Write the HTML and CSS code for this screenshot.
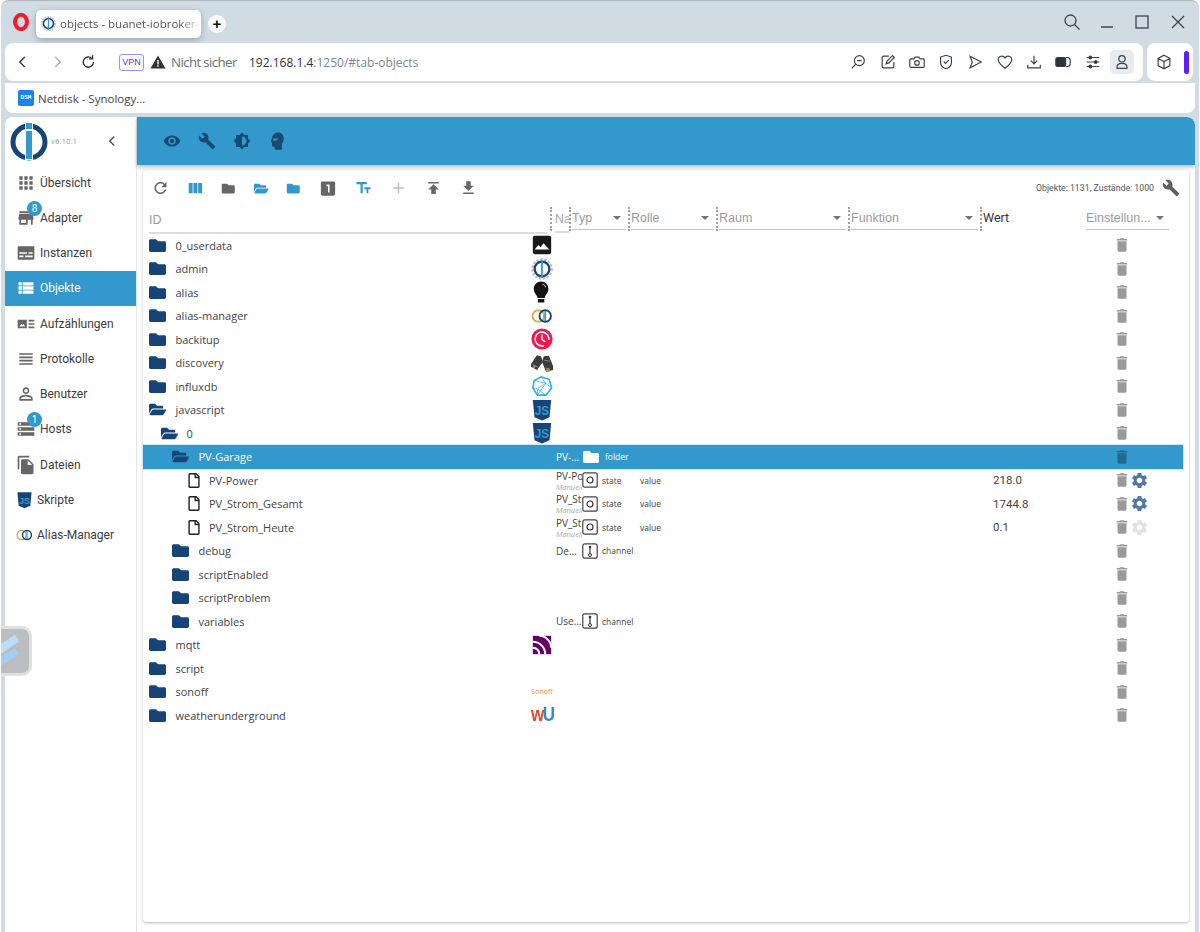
FILE: index.html
```html
<!DOCTYPE html>
<html lang="de">
<head>
<meta charset="utf-8">
<title>objects - buanet-iobroker</title>
<link rel="stylesheet" href="styles.css">
</head>
<body>
<svg class="defs" aria-hidden="true">
  <symbol id="m-eye" viewBox="0 0 24 24"><path d="M12 4.5C7 4.5 2.73 7.61 1 12c1.73 4.39 6 7.5 11 7.5s9.27-3.11 11-7.5c-1.73-4.39-6-7.5-11-7.5zM12 17c-2.76 0-5-2.24-5-5s2.24-5 5-5 5 2.24 5 5-2.24 5-5 5zm0-8c-1.66 0-3 1.34-3 3s1.34 3 3 3 3-1.34 3-3-1.34-3-3-3z"/></symbol>
  <symbol id="m-build" viewBox="0 0 24 24"><path d="M22.7 19l-9.1-9.1c.9-2.3.4-5-1.5-6.9-2-2-5-2.4-7.4-1.3L9 6 6 9 1.6 4.7C.4 7.1.9 10.1 2.9 12.1c1.9 1.9 4.6 2.4 6.9 1.5l9.1 9.1c.4.4 1 .4 1.4 0l2.3-2.3c.5-.4.5-1.1.1-1.4z"/></symbol>
  <symbol id="m-bright" viewBox="0 0 24 24"><path d="M20 15.31L23.31 12 20 8.69V4h-4.69L12 .69 8.69 4H4v4.69L.69 12 4 15.31V20h4.69L12 23.31 15.31 20H20v-4.69zM12 18V6c3.31 0 6 2.69 6 6s-2.69 6-6 6z"/></symbol>
  <symbol id="m-head" viewBox="0 0 24 24"><path fill-rule="evenodd" d="M9 23.500v-4H7c-1 0-1.800-1-1.800-2v-3.500L3.500 13 5.300 8.500C5.800 4 9 .5 13.500 .5c4.500 0 7.500 3.500 7.500 8.200 0 3-1 5.500-2.500 7.300v7.500zM7 8.500v3h3.800l1-1.500h1.700V8.500z"/></symbol>
  <symbol id="fa-folder" viewBox="0 0 512 512"><path d="M464 128H272l-64-64H48C21.490 64 0 85.490 0 112v288c0 26.510 21.490 48 48 48h416c26.510 0 48-21.490 48-48V176c0-26.510-21.490-48-48-48z"/></symbol>
  <symbol id="fa-open" viewBox="0 0 576 512"><path d="M572.694 292.093L500.270 416.248A63.997 63.997 0 0 1 444.989 448H45.025c-18.523 0-30.064-20.093-20.731-36.093l72.424-124.155A64 64 0 0 1 152 256h399.964c18.523 0 30.064 20.093 20.730 36.093zM152 224h328v-48c0-26.510-21.490-48-48-48H272l-64-64H48C21.490 64 0 85.490 0 112v278.046l69.077-118.418C86.214 242.250 117.989 224 152 224z"/></symbol>
  <symbol id="fa-file" viewBox="0 0 384 512"><path d="M369.900 97.900L286 14C277 5 264.800-.1 252.100-.1H48C21.500 0 0 21.500 0 48v416c0 26.500 21.500 48 48 48h288c26.500 0 48-21.500 48-48V131.900c0-12.700-5.100-25-14.100-34zM332.100 128H256V51.900l76.100 76.100zM48 464V48h160v104c0 13.300 10.700 24 24 24h104v288H48z"/></symbol>
  <symbol id="m-del" viewBox="0 0 24 24"><path d="M6 19c0 1.100.9 2 2 2h8c1.100 0 2-.9 2-2V7H6v12zM19 4h-3.500l-1-1h-5l-1 1H5v2h14V4z"/></symbol>
  <symbol id="m-gear" viewBox="0 0 24 24"><path d="M19.140 12.940c.04-.3.06-.61.06-.94 0-.32-.02-.64-.07-.94l2.030-1.580c.18-.14.23-.41.12-.61l-1.920-3.320c-.12-.22-.37-.29-.59-.22l-2.390.96c-.5-.38-1.030-.7-1.620-.94l-.36-2.540c-.04-.24-.24-.41-.48-.41h-3.840c-.24 0-.43.17-.47.41l-.36 2.540c-.59.24-1.130.57-1.620.94l-2.390-.96c-.22-.08-.47 0-.59.22L2.740 8.870c-.12.21-.08.47.12.61l2.030 1.580c-.05.3-.09.63-.09.94s.02.64.07.94l-2.030 1.580c-.18.14-.23.41-.12.61l1.920 3.320c.12.22.37.29.59.22l2.390-.96c.5.38 1.030.7 1.620.94l.36 2.540c.05.24.24.41.48.41h3.840c.24 0 .44-.17.47-.41l.36-2.540c.59-.24 1.130-.56 1.620-.94l2.390.96c.22.08.47 0 .59-.22l1.920-3.320c.12-.22.07-.47-.12-.61l-2.010-1.580zM12 15.600c-1.980 0-3.600-1.620-3.600-3.600s1.620-3.600 3.600-3.600 3.600 1.620 3.600 3.600-1.620 3.600-3.600 3.600z"/></symbol>
  <symbol id="m-refresh" viewBox="0 0 24 24"><path d="M17.650 6.350C16.200 4.900 14.210 4 12 4c-4.420 0-7.990 3.580-7.990 8s3.570 8 7.990 8c3.730 0 6.840-2.550 7.730-6h-2.080c-.82 2.330-3.040 4-5.650 4-3.310 0-6-2.690-6-6s2.690-6 6-6c1.660 0 3.140.69 4.220 1.780L13 11h7V4l-2.350 2.350z"/></symbol>
  <symbol id="m-cols" viewBox="0 0 24 24"><path d="M10 18h5V5h-5v13zm-6 0h5V5H4v13zM16 5v13h5V5h-5z"/></symbol>
  <symbol id="m-one" viewBox="0 0 24 24"><path d="M19 3H5c-1.100 0-2 .9-2 2v14c0 1.100.9 2 2 2h14c1.100 0 2-.9 2-2V5c0-1.100-.9-2-2-2zm-5 14h-2V9h-2V7h4v10z"/></symbol>
  <symbol id="m-size" viewBox="0 0 24 24"><path d="M2.500 4v3h5.500v12h3V7h5.500V4zM13 11v2.500h3V19h2.500v-5.500h3V11z"/></symbol>
  <symbol id="m-add" viewBox="0 0 24 24"><path d="M19 13h-6v6h-2v-6H5v-2h6V5h2v6h6v2z"/></symbol>
  <symbol id="m-pub" viewBox="0 0 24 24"><path d="M5 4v2h14V4H5zm0 10h4v6h6v-6h4l-7-7-7 7z"/></symbol>
  <symbol id="m-down" viewBox="0 0 24 24"><path d="M19 9h-4V3H9v6H5l7 7 7-7zM5 18v2h14v-2H5z"/></symbol>
  <symbol id="m-apps" viewBox="0 0 24 24"><path d="M4 8h4V4H4v4zm6 12h4v-4h-4v4zm-6 0h4v-4H4v4zm0-6h4v-4H4v4zm6 0h4v-4h-4v4zm6-10v4h4V4h-4zm-6 4h4V4h-4v4zm6 6h4v-4h-4v4zm0 6h4v-4h-4v4z"/></symbol>
  <symbol id="m-store" viewBox="0 0 24 24"><path d="M20 4H4v2h16V4zm1 10v-2l-1-5H4l-1 5v2h1v6h10v-6h4v6h2v-6h1zm-9 4H6v-4h6v4z"/></symbol>
  <symbol id="m-inst" viewBox="0 0 24 24"><path fill-rule="evenodd" d="M3 4h18a1 1 0 0 1 1 1v14a1 1 0 0 1-1 1H3a1 1 0 0 1-1-1V5a1 1 0 0 1 1-1zM4 11v2h9v-2zM15 11v2h5v-2zM4 15v2h5v-2zM11 15v2h9v-2z"/></symbol>
  <symbol id="m-list" viewBox="0 0 24 24"><path d="M3 14h4v-4H3v4zm0 5h4v-4H3v4zM3 9h4V5H3v4zm5 5h13v-4H8v4zm0 5h13v-4H8v4zM8 5v4h13V5H8z"/></symbol>
  <symbol id="m-enum" viewBox="0 0 24 24"><path fill-rule="evenodd" d="M2 7h11v10H2zM4 15h7l-2-3-1.500 1.500L6.500 12zM15 7h7v2h-7zM15 11h7v2h-7zM15 15h7v2h-7z"/></symbol>
  <symbol id="m-log" viewBox="0 0 24 24"><path d="M4 15h16v-2H4v2zm0 4h16v-2H4v2zm0-8h16V9H4v2zm0-6v2h16V5H4z"/></symbol>
  <symbol id="m-user" viewBox="0 0 24 24"><path d="M12 5.900c1.160 0 2.100.94 2.100 2.100s-.94 2.100-2.100 2.100S9.900 9.160 9.900 8s.94-2.100 2.100-2.100m0 9c2.970 0 6.100 1.460 6.100 2.100v1.100H5.900V17c0-.64 3.130-2.100 6.100-2.100M12 4C9.790 4 8 5.790 8 8s1.790 4 4 4 4-1.790 4-4-1.790-4-4-4zm0 9c-2.670 0-8 1.340-8 4v3h16v-3c0-2.660-5.330-4-8-4z"/></symbol>
  <symbol id="m-host" viewBox="0 0 24 24"><path d="M2 20h20v-4H2v4zm2-3h2v2H4v-2zM2 4v4h20V4H2zm4 3H4V5h2v2zm-4 7h20v-4H2v4zm2-3h2v2H4v-2z"/></symbol>
  <symbol id="m-files" viewBox="0 0 24 24"><path d="M16 1H4c-1.100 0-2 .9-2 2v14h2V3h12V1zm-1 4l6 6v10c0 1.100-.9 2-2 2H7.990C6.890 23 6 22.100 6 21l.01-14c0-1.100.89-2 1.990-2h7zm-1 7h5.500L14 6.500V12z"/></symbol>
  <symbol id="l-io" viewBox="0 0 40 40"><circle cx="20" cy="21" r="16" fill="none" stroke="#164477" stroke-width="5"/><rect x="16" y="1" width="8" height="38" fill="#fff"/><rect x="17" y="2" width="6" height="6" fill="#3399cc"/><rect x="17" y="10" width="6" height="28" fill="#3399cc"/></symbol>
  <symbol id="l-js" viewBox="0 0 24 24"><path fill="#164477" d="M2 1h20l-1.800 19L12 23.500 3.800 20z"/><text x="12" y="17" class="js-text">JS</text></symbol>
  <symbol id="l-alias" viewBox="0 0 24 24"><circle cx="8" cy="12" r="6.300" fill="none" stroke="#d9ab45" stroke-width="2"/><circle cx="15.500" cy="12" r="6.300" fill="none" stroke="#164477" stroke-width="2"/><rect x="14.600" y="6.500" width="1.800" height="11" fill="#3399cc"/></symbol>
  <symbol id="l-image" viewBox="0 0 24 24"><rect x="2" y="2" width="20" height="20" rx="2" fill="#1a1a1a"/><path fill="#fff" d="M4 17l4-5 2.500 2.500L13.500 10l6.500 7z"/></symbol>
  <symbol id="l-admin" viewBox="0 0 24 24"><circle cx="12" cy="12" r="10.500" fill="none" stroke="#b8bcc0" stroke-width="2.500" stroke-dasharray="2.500 1.800"/><circle cx="12" cy="12" r="8" fill="#fff" stroke="#164477" stroke-width="2.500"/><rect x="11" y="2" width="2" height="20" fill="#3399cc"/></symbol>
  <symbol id="l-bulb" viewBox="0 0 24 24"><path fill="#141414" d="M11 .5a8 8 0 0 0-8 8c0 3.500 2 5.500 3.200 7.500.6.9.8 1.500.9 2.500h7.800c.1-1 .3-1.600.9-2.500C17 14 19 12 19 8.500a8 8 0 0 0-8-8zM7.500 19.500h7V23.500h-7z"/><path fill="none" stroke="#fff" stroke-width="1" d="M12.500 3.500c1.800.4 3 1.600 3.400 3.400"/></symbol>
  <symbol id="l-backup" viewBox="0 0 24 24"><circle cx="12" cy="12" r="11.500" fill="#f5144c"/><circle cx="12" cy="12" r="7.500" fill="none" stroke="#fff" stroke-width="1.700" stroke-dasharray="38 9" transform="rotate(75 12 12)"/><path fill="none" stroke="#fff" stroke-width="1.600" d="M12 7v5.500l3.500 2.500"/></symbol>
  <symbol id="l-bino" viewBox="0 0 24 24"><g fill="#3c3c3c"><path d="M0 13L6.500 3.500 11 5l2 6-6.500 8.500L0 16z"/><path d="M24 15L19.500 4l-5.500.5-2 6.500 4.500 10.500 7.500-2z"/></g><path d="M2 13.500l5.500 3M14.500 9l6 1" stroke="#8a8a8a" stroke-width="1"/><circle cx="18.500" cy="19.500" r="2.200" fill="#a58a3a"/><circle cx="3.500" cy="16" r="1.600" fill="#a58a3a"/></symbol>
  <symbol id="l-influx" viewBox="0 0 24 24"><g fill="none" stroke="#2bb1f2" stroke-width="1.400"><path stroke-width="1.800" d="M11 2L20 5l2.500 9-6 8H7L2 14 3.500 6z"/><path stroke-width=".8" d="M3.500 6L16 9l-9 13M16 9l6.500 5M16 9l-5-7M7 15l9-6M2 14l5 1v7M7 15l9 7"/></g></symbol>
  <symbol id="l-mqtt" viewBox="0 0 24 24"><rect x="2" y="2" width="20" height="20" fill="#660066"/><g fill="none" stroke="#fff" stroke-width="2.200"><path d="M2 8.500c7.500 0 13.500 6 13.500 13.500"/><path d="M2 15c4 0 7 3 7 7"/><path d="M9 2c7 0 13 6 13 13"/></g></symbol>
  <symbol id="t-state" viewBox="0 0 16 16"><rect x=".8" y=".8" width="14.400" height="14.400" rx="2" fill="none" stroke="#444" stroke-width="1.200"/><circle cx="8" cy="8" r="3" fill="none" stroke="#333" stroke-width="1.200"/></symbol>
  <symbol id="t-channel" viewBox="0 0 16 16"><rect x=".8" y=".8" width="14.400" height="14.400" rx="2" fill="none" stroke="#444" stroke-width="1.200"/><path d="M8 5v6" stroke="#333" stroke-width="1.200"/><circle cx="8" cy="4" r="1.300" fill="#333"/><circle cx="8" cy="12" r="1.500" fill="none" stroke="#333"/></symbol>
</svg>

<div class="window">
  <div class="tabbar">
    <svg class="opera" viewBox="0 0 18 18"><ellipse cx="9" cy="9" rx="6" ry="7.200" fill="none" stroke="#ee1c2e" stroke-width="4"/></svg>
    <div class="tab">
      <svg class="tab-ico"><use href="#l-admin"/></svg>
      <span class="tab-title">objects - buanet-iobroker-admin</span>
    </div>
    <div class="newtab">+</div>
    <div class="winctl">
      <svg viewBox="0 0 20 20"><circle cx="8.500" cy="8.500" r="5.500"/><path d="M12.500 12.500l5 5"/></svg>
      <svg viewBox="0 0 20 20"><path d="M4 15h12"/></svg>
      <svg viewBox="0 0 20 20"><rect x="4" y="4" width="12" height="12"/></svg>
      <svg viewBox="0 0 20 20"><path d="M4 4l12 12M16 4L4 16"/></svg>
    </div>
  </div>

  <div class="toolrow">
    <div class="addr">
      <svg class="nav" viewBox="0 0 20 20"><path d="M12.500 4.500L7 10l5.500 5.500"/></svg>
      <svg class="nav nav-off" viewBox="0 0 20 20"><path d="M7.500 4.500L13 10l-5.500 5.500"/></svg>
      <svg class="nav nav-re" viewBox="0 0 20 20"><path d="M15.500 10a5.700 5.700 0 1 1-1.700-4"/><path d="M14.500 2.500V6.500h-4"/></svg>
      <span class="vpn">VPN</span>
      <svg class="warn" viewBox="0 0 16 16"><path fill="#333" d="M8 1.500L15.500 14.500H.5z"/><path fill="#fff" d="M7.300 6h1.400v4.500H7.300zM7.300 11.300h1.400v1.400H7.300z"/></svg>
      <span class="insecure">Nicht sicher</span>
      <span class="url">192.168.1.4<span class="url-dim">:1250/#tab-objects</span></span>
      <div class="addr-tools">
        <svg viewBox="0 0 20 20"><circle cx="11.500" cy="8.500" r="5.500"/><path d="M7.500 12.500L3 17M9 8.500h5"/></svg>
        <svg viewBox="0 0 20 20"><path d="M11 3.500H5a1.500 1.500 0 0 0-1.500 1.500v10A1.500 1.500 0 0 0 5 16.500h10a1.500 1.500 0 0 0 1.500-1.500V10"/><path d="M8 12l1-3 6-6 2 2-6 6z"/></svg>
        <svg viewBox="0 0 20 20"><path d="M3 6.500h3.500L8 4.500h4l1.500 2H17a1 1 0 0 1 1 1V15a1 1 0 0 1-1 1H3a1 1 0 0 1-1-1V7.500a1 1 0 0 1 1-1z"/><circle cx="10" cy="11" r="2.500"/></svg>
        <svg viewBox="0 0 20 20"><path d="M10 2.500l6 2v6c0 3.500-3 6-6 7-3-1-6-3.500-6-7v-6z"/><path d="M7.500 9.500l2 2 3.500-3.500"/></svg>
        <svg viewBox="0 0 20 20"><path d="M4.500 3.500L17 10 4.500 16.500 7 10z"/></svg>
        <svg viewBox="0 0 20 20"><path d="M10 17C5 13 2.500 10.500 2.500 7.500A4 4 0 0 1 10 5.500a4 4 0 0 1 7.500 2C17.500 10.500 15 13 10 17z"/></svg>
        <svg viewBox="0 0 20 20"><path d="M10 3v9M6.500 8.500L10 12l3.500-3.500M3 13v3.500h14V13"/></svg>
        <svg viewBox="0 0 20 20"><rect class="solid" x="2" y="5" width="11" height="10" rx="2"/><path d="M13 5h2a3 3 0 0 1 3 3v4a3 3 0 0 1-3 3h-2"/></svg>
        <svg viewBox="0 0 20 20"><path d="M3 5h14M3 10h14M3 15h14"/><circle class="solid" cx="7" cy="5" r="1.500"/><circle class="solid" cx="13" cy="10" r="1.500"/><circle class="solid" cx="7" cy="15" r="1.500"/></svg>
        <span class="profile"><svg viewBox="0 0 20 20"><circle cx="10" cy="6.500" r="3.500"/><path d="M4.500 17v-1.500c0-2.500 2-4 5.500-4s5.500 1.500 5.500 4V17z"/></svg></span>
      </div>
    </div>
    <div class="ext">
      <svg viewBox="0 0 20 20"><path d="M10 2.500l6.500 3.500v8L10 17.500 3.500 14V6zM3.500 6L10 9.500 16.500 6M10 9.500v8"/></svg>
      <span class="ext-bar"></span>
    </div>
  </div>

  <div class="bookmarks">
    <span class="dsm">DSM</span>
    <span class="bm-text">Netdisk - Synology...</span>
  </div>

  <div class="app">
    <aside class="side">
      <div class="side-top">
        <svg class="logo-main"><use href="#l-io"/></svg>
        <span class="version">v6.10.1</span>
        <svg class="side-back" viewBox="0 0 20 20"><path d="M12.500 5L7.500 10l5 5"/></svg>
      </div>
      <nav class="side-nav">
        <a class="item"><svg class="item-ico"><use href="#m-apps"/></svg><span>Übersicht</span></a>
        <a class="item"><svg class="item-ico"><use href="#m-store"/></svg><span>Adapter</span><b class="badge">8</b></a>
        <a class="item"><svg class="item-ico"><use href="#m-inst"/></svg><span>Instanzen</span></a>
        <a class="item item-on"><svg class="item-ico"><use href="#m-list"/></svg><span>Objekte</span></a>
        <a class="item"><svg class="item-ico"><use href="#m-enum"/></svg><span>Aufzählungen</span></a>
        <a class="item"><svg class="item-ico"><use href="#m-log"/></svg><span>Protokolle</span></a>
        <a class="item"><svg class="item-ico"><use href="#m-user"/></svg><span>Benutzer</span></a>
        <a class="item"><svg class="item-ico"><use href="#m-host"/></svg><span>Hosts</span><b class="badge">1</b></a>
        <a class="item"><svg class="item-ico"><use href="#m-files"/></svg><span>Dateien</span></a>
        <a class="item item-img"><svg class="item-ico"><use href="#l-js"/></svg><span>Skripte</span></a>
        <a class="item item-img"><svg class="item-ico"><use href="#l-alias"/></svg><span>Alias-Manager</span></a>
      </nav>
    </aside>

    <main class="main">
      <header class="topbar">
        <svg class="top-ico"><use href="#m-eye"/></svg>
        <svg class="top-ico"><use href="#m-build"/></svg>
        <svg class="top-ico"><use href="#m-bright"/></svg>
        <svg class="top-ico"><use href="#m-head"/></svg>
      </header>

      <section class="panel">
        <div class="tools">
          <svg class="tool tool-a t-grey"><use href="#m-refresh"/></svg>
          <svg class="tool tool-b t-blue"><use href="#m-cols"/></svg>
          <svg class="tool tool-f t-grey"><use href="#fa-folder"/></svg>
          <svg class="tool tool-f t-blue"><use href="#fa-open"/></svg>
          <svg class="tool tool-f t-blue"><use href="#fa-folder"/></svg>
          <svg class="tool tool-c t-grey"><use href="#m-one"/></svg>
          <svg class="tool tool-a t-blue"><use href="#m-size"/></svg>
          <svg class="tool tool-a t-off"><use href="#m-add"/></svg>
          <svg class="tool tool-a t-grey"><use href="#m-pub"/></svg>
          <svg class="tool tool-a t-grey"><use href="#m-down"/></svg>
          <span class="stats">Objekte: 1131, Zustände: 1000</span>
          <svg class="stats-ico"><use href="#m-build"/></svg>
        </div>

        <div class="thead">
          <div class="th th-id"><span class="th-idtext">ID</span></div>
          <div class="th th-name"><span class="th-idtext">Na</span></div>
          <div class="th th-typ"><span class="filter">Typ</span></div>
          <div class="th th-rolle"><span class="filter">Rolle</span></div>
          <div class="th th-raum"><span class="filter">Raum</span></div>
          <div class="th th-funk"><span class="filter">Funktion</span></div>
          <div class="th th-wert"><span class="th-wert-text">Wert</span></div>
          <div class="th th-einst"><span class="filter">Einstellun...</span></div>
        </div>

        <div class="tree">
          <div class="row"><div class="c-id l0"><svg class="fi"><use href="#fa-folder"/></svg><span class="lbl">0_userdata</span><svg class="logo"><use href="#l-image"/></svg></div><div class="c-name"></div><div class="c-type"></div><div class="c-role"></div><div class="c-val"></div><div class="c-act"><svg class="del"><use href="#m-del"/></svg></div></div>
          <div class="row"><div class="c-id l0"><svg class="fi"><use href="#fa-folder"/></svg><span class="lbl">admin</span><svg class="logo"><use href="#l-admin"/></svg></div><div class="c-name"></div><div class="c-type"></div><div class="c-role"></div><div class="c-val"></div><div class="c-act"><svg class="del"><use href="#m-del"/></svg></div></div>
          <div class="row"><div class="c-id l0"><svg class="fi"><use href="#fa-folder"/></svg><span class="lbl">alias</span><svg class="logo"><use href="#l-bulb"/></svg></div><div class="c-name"></div><div class="c-type"></div><div class="c-role"></div><div class="c-val"></div><div class="c-act"><svg class="del"><use href="#m-del"/></svg></div></div>
          <div class="row"><div class="c-id l0"><svg class="fi"><use href="#fa-folder"/></svg><span class="lbl">alias-manager</span><svg class="logo"><use href="#l-alias"/></svg></div><div class="c-name"></div><div class="c-type"></div><div class="c-role"></div><div class="c-val"></div><div class="c-act"><svg class="del"><use href="#m-del"/></svg></div></div>
          <div class="row"><div class="c-id l0"><svg class="fi"><use href="#fa-folder"/></svg><span class="lbl">backitup</span><svg class="logo"><use href="#l-backup"/></svg></div><div class="c-name"></div><div class="c-type"></div><div class="c-role"></div><div class="c-val"></div><div class="c-act"><svg class="del"><use href="#m-del"/></svg></div></div>
          <div class="row"><div class="c-id l0"><svg class="fi"><use href="#fa-folder"/></svg><span class="lbl">discovery</span><svg class="logo"><use href="#l-bino"/></svg></div><div class="c-name"></div><div class="c-type"></div><div class="c-role"></div><div class="c-val"></div><div class="c-act"><svg class="del"><use href="#m-del"/></svg></div></div>
          <div class="row"><div class="c-id l0"><svg class="fi"><use href="#fa-folder"/></svg><span class="lbl">influxdb</span><svg class="logo"><use href="#l-influx"/></svg></div><div class="c-name"></div><div class="c-type"></div><div class="c-role"></div><div class="c-val"></div><div class="c-act"><svg class="del"><use href="#m-del"/></svg></div></div>
          <div class="row"><div class="c-id l0"><svg class="fi"><use href="#fa-open"/></svg><span class="lbl">javascript</span><svg class="logo"><use href="#l-js"/></svg></div><div class="c-name"></div><div class="c-type"></div><div class="c-role"></div><div class="c-val"></div><div class="c-act"><svg class="del"><use href="#m-del"/></svg></div></div>
          <div class="row"><div class="c-id l1"><svg class="fi"><use href="#fa-open"/></svg><span class="lbl">0</span><svg class="logo"><use href="#l-js"/></svg></div><div class="c-name"></div><div class="c-type"></div><div class="c-role"></div><div class="c-val"></div><div class="c-act"><svg class="del"><use href="#m-del"/></svg></div></div>
          <div class="row row-on"><div class="c-id l2"><svg class="fi"><use href="#fa-open"/></svg><span class="lbl">PV-Garage</span></div><div class="c-name"><span class="nm">PV-Garage</span></div><div class="c-type"><svg class="ty ty-folder"><use href="#fa-folder"/></svg><span>folder</span></div><div class="c-role"></div><div class="c-val"></div><div class="c-act"><svg class="del"><use href="#m-del"/></svg></div></div>
          <div class="row"><div class="c-id l3"><svg class="fl"><use href="#fa-file"/></svg><span class="lbl">PV-Power</span></div><div class="c-name c-two"><span class="nm">PV-Power</span><i class="sub">Manuell</i></div><div class="c-type"><svg class="ty"><use href="#t-state"/></svg><span>state</span></div><div class="c-role">value</div><div class="c-val">218.0</div><div class="c-act"><svg class="del"><use href="#m-del"/></svg><svg class="gear"><use href="#m-gear"/></svg></div></div>
          <div class="row"><div class="c-id l3"><svg class="fl"><use href="#fa-file"/></svg><span class="lbl">PV_Strom_Gesamt</span></div><div class="c-name c-two"><span class="nm">PV_Strom</span><i class="sub">Manuell</i></div><div class="c-type"><svg class="ty"><use href="#t-state"/></svg><span>state</span></div><div class="c-role">value</div><div class="c-val">1744.8</div><div class="c-act"><svg class="del"><use href="#m-del"/></svg><svg class="gear"><use href="#m-gear"/></svg></div></div>
          <div class="row"><div class="c-id l3"><svg class="fl"><use href="#fa-file"/></svg><span class="lbl">PV_Strom_Heute</span></div><div class="c-name c-two"><span class="nm">PV_Strom</span><i class="sub">Manuell</i></div><div class="c-type"><svg class="ty"><use href="#t-state"/></svg><span>state</span></div><div class="c-role">value</div><div class="c-val">0.1</div><div class="c-act"><svg class="del"><use href="#m-del"/></svg><svg class="gear gear-off"><use href="#m-gear"/></svg></div></div>
          <div class="row"><div class="c-id l2"><svg class="fi"><use href="#fa-folder"/></svg><span class="lbl">debug</span></div><div class="c-name"><span class="nm">Debug</span></div><div class="c-type"><svg class="ty"><use href="#t-channel"/></svg><span>channel</span></div><div class="c-role"></div><div class="c-val"></div><div class="c-act"><svg class="del"><use href="#m-del"/></svg></div></div>
          <div class="row"><div class="c-id l2"><svg class="fi"><use href="#fa-folder"/></svg><span class="lbl">scriptEnabled</span></div><div class="c-name"></div><div class="c-type"></div><div class="c-role"></div><div class="c-val"></div><div class="c-act"><svg class="del"><use href="#m-del"/></svg></div></div>
          <div class="row"><div class="c-id l2"><svg class="fi"><use href="#fa-folder"/></svg><span class="lbl">scriptProblem</span></div><div class="c-name"></div><div class="c-type"></div><div class="c-role"></div><div class="c-val"></div><div class="c-act"><svg class="del"><use href="#m-del"/></svg></div></div>
          <div class="row"><div class="c-id l2"><svg class="fi"><use href="#fa-folder"/></svg><span class="lbl">variables</span></div><div class="c-name"><span class="nm">User variables</span></div><div class="c-type"><svg class="ty"><use href="#t-channel"/></svg><span>channel</span></div><div class="c-role"></div><div class="c-val"></div><div class="c-act"><svg class="del"><use href="#m-del"/></svg></div></div>
          <div class="row"><div class="c-id l0"><svg class="fi"><use href="#fa-folder"/></svg><span class="lbl">mqtt</span><svg class="logo"><use href="#l-mqtt"/></svg></div><div class="c-name"></div><div class="c-type"></div><div class="c-role"></div><div class="c-val"></div><div class="c-act"><svg class="del"><use href="#m-del"/></svg></div></div>
          <div class="row"><div class="c-id l0"><svg class="fi"><use href="#fa-folder"/></svg><span class="lbl">script</span></div><div class="c-name"></div><div class="c-type"></div><div class="c-role"></div><div class="c-val"></div><div class="c-act"><svg class="del"><use href="#m-del"/></svg></div></div>
          <div class="row"><div class="c-id l0"><svg class="fi"><use href="#fa-folder"/></svg><span class="lbl">sonoff</span><span class="logo-sonoff">Sonoff</span></div><div class="c-name"></div><div class="c-type"></div><div class="c-role"></div><div class="c-val"></div><div class="c-act"><svg class="del"><use href="#m-del"/></svg></div></div>
          <div class="row"><div class="c-id l0"><svg class="fi"><use href="#fa-folder"/></svg><span class="lbl">weatherunderground</span><span class="logo-wu"><span class="wu-w">w</span><span class="wu-u">U</span></span></div><div class="c-name"></div><div class="c-type"></div><div class="c-role"></div><div class="c-val"></div><div class="c-act"><svg class="del"><use href="#m-del"/></svg></div></div>
        </div>
      </section>
    </main>
  </div>

  <div class="float-widget">
    <svg viewBox="0 0 30 44"><path d="M-4 24L18 9" stroke="#bcdcf7" stroke-width="8"/><path d="M-4 36L18 22" stroke="#a5cdf0" stroke-width="8"/></svg>
  </div>
</div>
</body>
</html>
```

FILE: styles.css
```css
* { box-sizing: border-box; }
html, body { margin: 0; height: 932px; overflow: hidden; background: #fff; }
body { font-family: Roboto, "Liberation Sans", sans-serif; color: #333; }
.defs { width: 0; height: 0; position: absolute; }

.window {
  position: relative;
  width: 1198px;
  height: 932px;
  margin-left: 1px;
  background: #d1dbe4;
  border-top: 1px solid #b2b7bc;
  border-radius: 8px 8px 0 0;
  display: flex;
  flex-direction: column;
  overflow: hidden;
}

/* browser chrome */
.tabbar { height: 42px; flex: none; display: flex; align-items: center; padding: 0 0 0 11px; }
.opera { width: 18px; height: 18px; margin-right: 6px; }
.tab {
  width: 165px; height: 28px; margin-top: 3px;
  background: #fff; border-radius: 5px;
  box-shadow: 0 2px 6px rgba(40, 60, 80, .35);
  display: flex; align-items: center; padding-left: 5px; overflow: hidden;
}
.tab-ico { width: 15px; height: 15px; flex: none; margin-right: 4px; }
.tab-title {
  font-size: 11.500px; color: #555; white-space: nowrap; overflow: hidden;
  font-family: "Open Sans", sans-serif;
  -webkit-mask-image: linear-gradient(90deg, #000 85%, transparent 100%);
  mask-image: linear-gradient(90deg, #000 85%, transparent 100%);
}
.newtab {
  width: 18px; height: 18px; margin-left: 7px; margin-top: 3px;
  border-radius: 50%; background: #fff; color: #111;
  font: 700 15px/18px "Liberation Sans", sans-serif; text-align: center;
}
.winctl { margin-left: auto; display: flex; padding-right: 3.500px; }
.winctl svg { width: 20px; height: 20px; margin: 0 7.700px; fill: none; stroke: #3a4450; stroke-width: 1.300; }

.toolrow { display: flex; height: 38px; flex: none; padding-left: 4px; gap: 4px; }
.addr {
  width: 1138px; background: #fff; border-radius: 8px;
  display: flex; align-items: center; padding-right: 6.500px;
}
.nav { width: 35px; height: 18px; fill: none; stroke: #333; stroke-width: 1.500; flex: none; }
.nav-off { stroke: #a9adb2; }
.nav-re { width: 27px; }
.vpn {
  margin-left: 17px; width: 25px; height: 17px; flex: none;
  border: 1px solid #a58cf5; border-radius: 3px; color: #5a35e8;
  font: 9px/15px "Liberation Sans", sans-serif; text-align: center;
}
.warn { width: 16px; height: 16px; margin-left: 6px; flex: none; }
.insecure { margin-left: 5px; width: 66px; font: 13.300px "Open Sans", sans-serif; color: #6b7076; white-space: nowrap; letter-spacing: -.62px; }
.url { margin-left: 12px; font: 12px "Open Sans", sans-serif; color: #2d3238; white-space: nowrap; }
.url-dim { color: #7c8894; }
.addr-tools { margin-left: auto; display: flex; align-items: center; }
.addr-tools svg { width: 18px; height: 18px; margin: 0 5.650px; fill: none; stroke: #39424c; stroke-width: 1.300; flex: none; }
.addr-tools .solid { fill: #2a333d; }
.profile {
  width: 24px; height: 24px; margin: 0 2.650px; background: #e6ebf0; border-radius: 5px;
  display: flex; align-items: center; justify-content: center; flex: none;
}
.addr-tools .profile svg { margin: 0; }
.ext { width: 46px; background: #fff; border-radius: 8px; display: flex; align-items: center; padding-left: 8px; }
.ext svg { width: 18px; height: 18px; fill: none; stroke: #39424c; stroke-width: 1.300; flex: none; }
.ext-bar { width: 5px; height: 23px; margin-left: 11px; background: #5a1fff; border-radius: 3px; }

.bookmarks {
  height: 30px; flex: none; margin: 2px 4px 0 4px; background: #fff; border-radius: 0 0 8px 8px;
  display: flex; align-items: center; padding-left: 13px;
}
.dsm {
  width: 16px; height: 16px; background: #1a82ea; border-radius: 2px; color: #fff;
  font: 700 6px/16px "Liberation Mono", monospace; text-align: center; flex: none;
}
.bm-text { margin-left: 4px; font: 11.500px "Open Sans", sans-serif; color: #444; }

/* app */
.app {
  flex: 1; min-height: 0; margin: 4px 4px 0 4px; background: #fff;
  border-radius: 8px 8px 0 0; display: flex; overflow: hidden;
}
.side { width: 132px; flex: none; border-right: 1px solid #e4e4e4; background: #fff; }
.side-top { height: 48px; display: flex; align-items: center; padding-left: 4px; }
.logo-main { width: 40px; height: 40px; flex: none; }
.version { font-size: 8px; color: #a8a8a8; margin-left: 2px; width: 48px; }
.side-back { width: 18px; height: 18px; fill: none; stroke: #555; stroke-width: 1.600; margin-left: 4px; }

.item {
  position: relative; height: 35.270px; display: flex; align-items: center;
  padding-left: 11px; font-size: 12px; color: #3c3c3c;
}
.item-ico { width: 20px; height: 20px; fill: #666; flex: none; margin-right: 4px; }
.item-on { background: #3399cc; color: #fff; }
.item-on .item-ico { fill: #fff; }
.item-img { padding-left: 11px; }
.item-img .item-ico { width: 17px; height: 20px; margin-right: 4px; }
.badge {
  position: absolute; left: 22px; top: .5px; width: 15px; height: 15px; border-radius: 50%;
  background: #3399cc; color: #fff; font: 400 10px/15px Roboto, sans-serif; text-align: center;
}
.js-text { font: 700 13px "Liberation Sans", sans-serif; fill: #3399cc; text-anchor: middle; }

.main { flex: 1; min-width: 0; display: flex; flex-direction: column; }
.topbar {
  height: 48px; flex: none; background: #3399cc;
  border-radius: 0 8px 0 0;
  box-shadow: 0 2px 4px rgba(0, 0, 0, .28);
  display: flex; align-items: center; padding-left: 26px; gap: 17px;
  position: relative;
}
.top-ico { width: 18px; height: 18px; fill: #174a70; flex: none; }
.panel {
  flex: 1; min-height: 0; margin: 5px 6px 10px; padding-top: 6px;
  background: #fff; border-radius: 4px;
  box-shadow: 0 1px 3px rgba(0, 0, 0, .28);
}

.tools { height: 24px; display: flex; align-items: center; padding-right: 9px; }
.tool { flex: none; }
.tool-a { width: 35px; height: 18px; }
.tool-b { width: 34px; height: 19px; margin-left: 0; }
.tool-c { width: 36px; height: 19px; }
.tool-f { width: 32.500px; height: 13px; }
.t-grey { fill: #666; }
.t-blue { fill: #3399cc; }
.t-off { fill: #bcbcbc; }
.stats { margin-left: auto; font-size: 8.750px; color: #555; margin-right: 8px; }
.stats-ico { width: 18px; height: 18px; fill: #5f5f5f; flex: none; }

.thead { height: 34px; display: flex; padding-top: 6px; }
.th { flex: none; height: 28px; display: flex; align-items: flex-start; }
.th-id { width: 407px; padding: 0 3px 0 6px; }
.th-idtext {
  display: block; width: 100%; height: 28px; color: #9b9b9b; font: 12.500px/28px "Liberation Sans", sans-serif;
  border-bottom: 2px solid #dcdcdc; overflow: hidden;
}
.th-name { width: 19px; padding-left: 3px; }
.th-typ { width: 59px; }
.th-rolle { width: 88px; }
.th-raum { width: 132px; }
.th-funk { width: 132px; }
.th-wert { width: 105px; }
.th-einst { width: 86px; }
.th-name, .th-typ, .th-rolle, .th-raum, .th-funk, .th-wert { border-left: 2px dotted #a0a0a0; height: 24px; margin-top: 1px; }
.th-einst { margin-top: 1px; height: 24px; }
.th-name .th-idtext { height: 27px; line-height: 26px; margin-top: -1px; color: #aaa; }
.filter {
  position: relative; display: block; flex: 1; margin: 0 2px 0 1px; height: 23px;
  border-bottom: 1px solid #c4c4c4;
  font: 12.500px/22px "Liberation Sans", sans-serif; color: #9b9b9b; white-space: nowrap;
}
.filter::after {
  content: ""; position: absolute; right: 5px; top: 9px;
  border: 4px solid transparent; border-top: 4px solid #757575; border-bottom: 0;
}
.th-wert-text { font-size: 12.500px; line-height: 22px; color: #333; margin-left: 1px; }

.tree { display: grid; grid-auto-rows: 23.500px; padding-right: 6px; margin-top: -.5px; }
.row { display: grid; grid-template-columns: 407px 32px 58px 353px 119px 71px; align-items: center; font-family: "Open Sans", Roboto, sans-serif; min-width: 0; }
.row > div { min-width: 0; height: 100%; display: flex; align-items: center; }
.c-id { font-size: 11px; color: #444; }
.l0 { padding-left: 6px; }
.l1 { padding-left: 17.500px; }
.l2 { padding-left: 29px; }
.l3 { padding-left: 45px; }
.fi { width: 17px; height: 17px; fill: #164477; flex: none; margin-right: 9.500px; }
.fl { width: 12px; height: 15px; fill: #222; flex: none; margin-right: 9px; }
.l1 .fi { margin-right: 9px; }
.lbl { white-space: nowrap; }
.logo { width: 22px; height: 22px; margin-left: auto; margin-right: -3px; flex: none; }
.logo-sonoff { margin-left: auto; margin-right: -3px; width: 22px; font-size: 7px; font-weight: 400; color: #f0932b; text-align: center; }
.logo-wu {
  margin-left: auto; margin-right: -3px; width: 22px; font: 700 17px/16px "Liberation Sans", sans-serif;
  text-align: center; letter-spacing: -1.500px; white-space: nowrap; transform: scaleY(1.2);
}
.wu-w { color: #e2492b; }
.wu-u { color: #2a8fd0; }
.c-name { padding-left: 6px; font-size: 10px; color: #444; overflow: hidden; }
.nm { display: block; width: 100%; white-space: nowrap; overflow: hidden; text-overflow: ellipsis; }
.row > .c-two { flex-direction: column; align-items: flex-start; justify-content: center; }
.c-two .nm { text-overflow: clip; line-height: 13px; }
.sub { font-size: 7.500px; color: #aaa; line-height: 8px; white-space: nowrap; }
.c-type { font-size: 8.500px; color: #444; }
.ty { width: 16px; height: 16px; flex: none; margin-right: 4px; }
.ty-folder { fill: #fff; margin-left: 1px; margin-right: 6px; }
.c-role { font-size: 8.500px; color: #444; }
.c-val { font-family: Roboto, sans-serif; font-size: 11.500px; color: #444; }
.c-act { padding-left: .5px; }
.del { width: 18px; height: 18px; fill: #9a9a9a; flex: none; }
.gear { width: 19px; height: 19px; fill: #4f78a8; flex: none; margin-left: -1px; }
.gear-off { fill: #e2e2e2; }

.row-on { background: #3399cc; box-shadow: 0 0 0 1px #cfe6f3; }
.row-on .c-id, .row-on .c-name, .row-on .c-type { color: #fff; }
.row-on .del { fill: #1f6a90; }

.float-widget {
  position: absolute; left: -12px; top: 625px; width: 43px; height: 50px;
  background: #bcbdc1; border: 3px solid #dfe0e3; border-radius: 10px; overflow: hidden;
  display: flex; justify-content: flex-end;
}
.float-widget svg { width: 30px; height: 44px; }
```
